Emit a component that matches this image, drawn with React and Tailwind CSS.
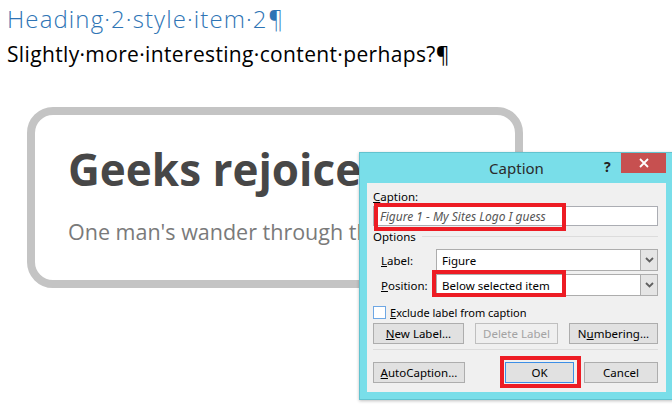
import React from "react";

function Chevron() {
  return (
    <svg width="9" height="6" viewBox="0 0 9 6" className="block">
      <polyline points="1,1 4.5,4.5 8,1" fill="none" stroke="#606060" strokeWidth="1.8" />
    </svg>
  );
}

function Combo({ text }) {
  return (
    <div className="flex h-[22px] flex-1 border border-[#adadad] bg-white">
      <div className="flex flex-1 items-center pl-[5px] text-[#000]">{text}</div>
      <div className="flex w-[17px] items-center justify-center border-l border-[#adadad] bg-[#e5e5e5]">
        <Chevron />
      </div>
    </div>
  );
}

function Btn({ children, className = "", disabled = false, def = false }) {
  return (
    <div
      className={
        "flex h-[21px] items-center justify-center border " +
        (disabled
          ? "border-[#bfbfbf] bg-[#efefef] text-[#a3a3a3] "
          : def
          ? "border-[#3c8ee6] bg-[#e1e1e1] text-black "
          : "border-[#adadad] bg-[#e1e1e1] text-black ") +
        className
      }
    >
      {children}
    </div>
  );
}

export default function App() {
  return (
    <div className="relative h-[406px] w-[672px] overflow-hidden bg-white">
      <div className="pl-[7px] pt-[4px]">
        <p className="font-['Open_Sans'] text-[24px] font-light leading-[30px] tracking-[1.1px] text-[#2e74b5] whitespace-nowrap">
          Heading·2·style·item·2¶
        </p>
        <p className="mt-[5px] font-['Open_Sans'] text-[21px] leading-[30px] tracking-[0.35px] text-black whitespace-nowrap">
          Slightly·more·interesting·content·perhaps?¶
        </p>
      </div>

      <div className="ml-[27px] mt-[38px] h-[181px] w-[496px] rounded-[26px] border-[8px] border-[#c4c4c4] bg-white pl-[33px] pt-[29px]">
        <p className="font-['Open_Sans'] text-[44px] font-bold leading-[50px] text-[#474747] whitespace-nowrap">
          Geeks rejoice
        </p>
        <p className="mt-[24px] font-['Open_Sans'] text-[21.5px] leading-[28px] text-[#7a7a7a] whitespace-nowrap">
          One man's wander through the world
        </p>
      </div>

      {/* Caption dialog window */}
      <div className="absolute left-[359px] top-[152px] flex h-[248px] w-[315px] flex-col border border-[#62c3cf] bg-[#79dee9] font-['Noto_Sans',sans-serif] text-[11.5px] shadow-[0_1px_3px_rgba(0,0,0,0.25)]">
        <div className="relative flex h-[30px] items-center justify-center">
          <span className="text-[15px] text-[#2b2b2b]">Caption</span>
          <span className="absolute left-[244px] top-[3px] text-[14px] font-bold text-[#222]">?</span>
          <div className="absolute left-[261px] top-0 flex h-[20px] w-[45px] items-center justify-center bg-[#c75050]">
            <svg width="10" height="10" viewBox="0 0 10 10">
              <path d="M1 1 L9 9 M9 1 L1 9" stroke="#fff" strokeWidth="1.8" />
            </svg>
          </div>
        </div>

        <div className="relative mx-[7px] h-[209px] bg-[#f0f0f0] pl-[6px] pr-[8px] pt-[6px] leading-[15px] text-black">
          <div>
            <span className="underline">C</span>aption:
          </div>
          <div className="mt-[2px] flex h-[20px] items-center border border-[#abadb3] bg-white pl-[6px] text-[12px] italic text-[#555]">
            Figure 1 - My Sites Logo I guess
          </div>

          <div className="flex h-[20px] items-center">
            <span className="leading-[13px]">Options</span>
            <div className="ml-[6px] h-px flex-1 bg-[#dcdcdc]" />
          </div>

          <div className="mt-[3px] flex items-center">
            <div className="w-[63px] pl-[8px]">
              <span className="underline">L</span>abel:
            </div>
            <Combo text="Figure" />
          </div>
          <div className="mt-[3px] flex items-center">
            <div className="w-[63px] pl-[8px]">
              <span className="underline">P</span>osition:
            </div>
            <Combo text="Below selected item" />
          </div>

          <div className="mt-[10px] flex h-[13px] items-center">
            <div className="h-[13px] w-[13px] border border-[#6ea7e4] bg-white" />
            <span className="ml-[4px] text-[11px]">
              <span className="underline">E</span>xclude label from caption
            </span>
          </div>

          <div className="mt-[4px] flex">
            <Btn className="w-[91px]">
              <span className="underline">N</span>ew Label...
            </Btn>
            <Btn className="ml-[11px] w-[83px]" disabled>
              Delete Label
            </Btn>
            <Btn className="ml-[11px] w-[89px]">
              N<span className="underline">u</span>mbering...
            </Btn>
          </div>

          <div className="mt-[5px] h-px bg-[#dcdcdc]" />

          <div className="mt-[12px] flex">
            <Btn className="w-[92px]">
              <span className="underline">A</span>utoCaption...
            </Btn>
            <Btn className="ml-[40px] w-[69px]" def>
              OK
            </Btn>
            <Btn className="ml-[10px] w-[74px]">Cancel</Btn>
          </div>

          {/* red highlight boxes */}
          <div className="absolute left-[7px] top-[20px] h-[28px] w-[192px] border-[4px] border-[#ed1c24]" />
          <div className="absolute left-[65px] top-[87px] h-[27px] w-[134px] border-[4px] border-[#ed1c24]" />
          <div className="absolute left-[133px] top-[173px] h-[32px] w-[81px] border-[4px] border-[#ed1c24]" />
        </div>
      </div>
    </div>
  );
}
